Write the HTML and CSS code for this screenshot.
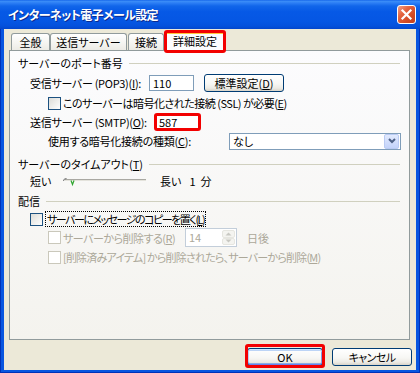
FILE: index.html
```html
<!DOCTYPE html>
<html lang="ja">
<head>
<meta charset="utf-8">
<title>インターネット電子メール設定</title>
<link rel="stylesheet" href="styles.css">
</head>
<body>
<div class="window">
  <div class="titlebar">
    <span class="title">インターネット電子メール設定</span>
    <span class="close"><svg width="13" height="13" viewBox="0 0 13 13"><path d="M2.5 2.5 L10.5 10.5 M10.5 2.5 L2.5 10.5" stroke="#fff" stroke-width="2.2" stroke-linecap="square" fill="none"/></svg></span>
  </div>
  <div class="body">
    <div class="tabs">
      <div class="tab t1">全般</div>
      <div class="tab t2">送信サーバー</div>
      <div class="tab t3">接続</div>
      <div class="tab active mark">詳細設定</div>
    </div>
    <div class="panel">
      <div class="group"><span>サーバーのポート番号</span><span class="rule"></span></div>
      <div class="row r-pop">
        <span class="lbl w-pop tight3">受信サーバー (POP3)(<u>I</u>):</span>
        <span class="edit">110</span>
        <span class="btn b-std">標準設定(<u>D</u>)</span>
      </div>
      <div class="row r-ssl indent2">
        <span class="check"></span><span class="clabel tight5">このサーバーは暗号化された接続 (SSL) が必要(<u>E</u>)</span>
      </div>
      <div class="row r-smtp">
        <span class="lbl w-smtp tight3">送信サーバー (SMTP)(<u>O</u>):</span>
        <span class="edit mark">587</span>
      </div>
      <div class="row r-enc indent2">
        <span class="lbl w-enc tight2">使用する暗号化接続の種類(<u>C</u>):</span>
        <span class="combo"><span class="combo-text">なし</span><span class="combo-btn"><svg width="8" height="6" viewBox="0 0 8 6"><path d="M1 1 L4 4 L7 1" stroke="#4D6185" stroke-width="2" fill="none"/></svg></span></span>
      </div>
      <div class="group g2"><span>サーバーのタイムアウト(<u>T</u>)</span><span class="rule"></span></div>
      <div class="row r-timeout">
        <span class="lbl w-short">短い</span>
        <svg class="slider" width="98" height="16" viewBox="0 0 98 16">
          <rect x="3" y="6" width="81" height="1" fill="#A9A8A2"/>
          <rect x="3" y="7" width="81" height="1" fill="#E4E3DC"/>
          <path d="M1.5 8 Q1.5 5.5 4.5 5.5" stroke="#6E6E6E" stroke-width="1" fill="none"/>
          <path d="M9 7.5 L10.5 11.5 L12 7.5" stroke="#2FA52F" stroke-width="1.2" fill="none"/>
        </svg>
        <span class="long">長い</span><span class="num">1</span><span class="unit">分</span>
      </div>
      <div class="group g3"><span>配信</span><span class="rule"></span></div>
      <div class="row r-copy">
        <span class="check"></span><span class="clabel focus tight15">サーバーにメッセージのコピーを置く(<u>L</u>)</span>
      </div>
      <div class="row r-del indent2 disabled">
        <span class="dgroup"><span class="check off"></span><span class="clabel tight5">サーバーから削除する(<u>R</u>)</span></span>
        <span class="spin"><span class="spin-text">14</span><span class="spin-btns"><span class="sb"><svg width="7" height="4" viewBox="0 0 7 4"><path d="M0.5 3.5 L3.5 0.5 L6.5 3.5Z" fill="#C8C8C2"/></svg></span><span class="sb"><svg width="7" height="4" viewBox="0 0 7 4"><path d="M0.5 0.5 L3.5 3.5 L6.5 0.5Z" fill="#C8C8C2"/></svg></span></span></span>
        <span class="days">日後</span>
      </div>
      <div class="row r-del2 indent2 disabled">
        <span class="check off"></span><span class="clabel tight8">[削除済みアイテム] から削除されたら、サーバーから削除(<u>M</u>)</span>
      </div>
    </div>
    <div class="buttons">
      <span class="btn b-ok b-default mark">OK</span>
      <span class="btn b-cancel tight6">キャンセル</span>
    </div>
  </div>
</div>
</body>
</html>
```

FILE: styles.css
```css
* { box-sizing: border-box; }
html, body { margin: 0; padding: 0; }
body {
  width: 420px;
  height: 373px;
  overflow: hidden;
  font-family: "Noto Sans CJK JP", "Noto Sans", sans-serif;
  font-size: 11px;
  line-height: 16px;
  color: #000;
  font-feature-settings: "palt";
  background: #fff;
}
u { text-decoration: underline; text-underline-offset: 1px; }

.tight2 { letter-spacing: -0.25px; }
.tight3 { letter-spacing: -0.3px; }
.tight5 { letter-spacing: -0.5px; }
.tight6 { letter-spacing: -0.6px; }
.tight8 { letter-spacing: -0.8px; }
.tight15 { letter-spacing: -1.5px; }

.window {
  width: 420px;
  height: 373px;
  display: flex;
  flex-direction: column;
  background: #0856E0;
  box-shadow: inset 1px 0 #0032B8, inset -1px 0 #0032B8, inset 0 -1px #0032B8;
}
.titlebar {
  height: 29px;
  flex: none;
  display: flex;
  align-items: center;
  justify-content: space-between;
  padding: 0 4px 0 8px;
  background: linear-gradient(to bottom, #0A5AE6 0, #3D8FF8 1px, #2C7EF5 3px, #1166EA 6px, #0659E6 40%, #0556E3 75%, #0451DC 90%, #0346CC 100%);
}
.title {
  color: #fff;
  font-weight: bold;
  font-size: 12px;
  letter-spacing: -0.6px;
  text-shadow: 1px 1px 0 #0C2A8E;
}
.close {
  width: 19px;
  height: 19px;
  border: 1px solid #fff;
  border-radius: 3px;
  background: linear-gradient(135deg, #F2A088 0%, #E4643F 35%, #D24A24 70%, #C0401E 100%);
  display: flex;
  align-items: center;
  justify-content: center;
}

.body {
  flex: 1;
  margin: 0 4px 3px 4px;
  padding: 2px 6px 0 5px;
  background: #ECE9D8;
  display: flex;
  flex-direction: column;
}

.tabs {
  display: flex;
  align-items: flex-start;
  height: 20px;
  padding-left: 2px;
  margin-bottom: -1px;
  flex: none;
}
.tab {
  height: 17px;
  margin-top: 2px;
  padding-top: 1px;
  border: 1px solid #919B9C;
  border-bottom: none;
  border-radius: 3px 3px 0 0;
  background: linear-gradient(#FFFFFF, #F4F4F0 60%, #ECEBE5);
  text-align: center;
  line-height: 15px;
  white-space: nowrap;
}
.t1 { width: 39px; }
.t2 { width: 77px; margin-right: 1px; }
.t3 { width: 36px; }
.tab.active {
  width: 62px;
  height: 20px;
  margin-top: 0;
  padding-top: 1px;
  line-height: 16px;
  border-top: 1px solid #E68B2C;
  background: #FCFCFE;
  box-shadow: inset 0 2px #FFC83C;
  position: relative;
  z-index: 2;
}

.mark { position: relative; }
.mark::after {
  content: "";
  position: absolute;
  inset: -3px;
  border: 3px solid #F20000;
  border-radius: 3px;
  pointer-events: none;
}
.tab.mark::after { inset: -2px -1px -2px -1px; }
.edit.mark::after { inset: -2px; }
.b-ok.mark::after { inset: -5px -3px -3px -3px; }

.panel {
  width: 401px;
  height: 290px;
  flex: none;
  border: 1px solid #919B9C;
  background: linear-gradient(#FCFCFE, #F4F3EE);
  padding: 4px 9px 0 8px;
  display: flex;
  flex-direction: column;
}
.group {
  display: flex;
  align-items: center;
  height: 16px;
  flex: none;
  white-space: nowrap;
}
.rule {
  flex: 1;
  height: 1px;
  background: #D0D0BF;
  margin-left: 6px;
}
.g2 { margin-top: 6px; }
.g3 { margin-top: 4px; }

.row {
  display: flex;
  align-items: center;
  flex: none;
  margin-left: 12px;
  white-space: nowrap;
}
.row.indent2 { margin-left: 30px; }
.r-pop { height: 20px; margin-top: 2px; }
.r-ssl { height: 18px; margin-top: 1px; }
.r-smtp { height: 18px; margin-top: 1px; }
.r-enc { height: 18px; margin-top: 1px; }
.r-timeout { height: 16px; margin-top: 1px; }
.r-copy { height: 18px; margin-top: 1px; }
.r-del { height: 19px; margin-top: 0; }
.r-del2 { height: 18px; margin-top: 1px; }

.lbl { flex: none; }
.w-pop { width: 119px; }
.w-smtp { width: 125px; }
.w-enc { width: 181px; }
.w-short { width: 32px; }

.edit {
  width: 45px;
  height: 16px;
  border: 1px solid #7F9DB9;
  background: #fff;
  padding-left: 3px;
  line-height: 14px;
  flex: none;
}

.btn {
  display: flex;
  align-items: center;
  justify-content: center;
  height: 18px;
  flex: none;
  border: 1px solid #003C74;
  border-radius: 3px;
  background: linear-gradient(#FFFFFF 0%, #F7F7F4 55%, #ECEBE5 82%, #D8D3C8 100%);
  line-height: 14px;
}
.b-std { width: 80px; margin-left: 10px; }
.b-default {
  box-shadow: inset 0 1px #CEE7FF, inset 0 2px #BCD4F6, inset 0 -1px #6982EE, inset 0 -2px #89ADE4, inset 1px 0 #B9CFF5, inset -1px 0 #7D9FE6;
}

.check {
  width: 13px;
  height: 13px;
  flex: none;
  border: 1px solid #1C5180;
  background: linear-gradient(135deg, #DCDCD7, #FFFFFF);
  margin-right: 2px;
}
.check.off {
  border-color: #CAC8BB;
  background: #fff;
}
.focus {
  border: 1px dotted #000;
  padding: 0 1px;
  line-height: 14px;
}
.disabled { color: #ACA899; }

.combo {
  width: 172px;
  height: 17px;
  flex: none;
  border: 1px solid #7F9DB9;
  background: #fff;
  display: flex;
  align-items: center;
  justify-content: space-between;
  padding: 0 1px 0 3px;
}
.combo-btn {
  width: 15px;
  height: 15px;
  border: 1px solid #BACBF3;
  border-radius: 2px;
  background: linear-gradient(#E2EAFE, #C3D3FA);
  display: flex;
  align-items: center;
  justify-content: center;
}

.slider { flex: none; display: block; }
.num { margin-left: 8px; }
.unit { margin-left: 5px; }

.dgroup {
  width: 137px;
  display: flex;
  align-items: center;
  flex: none;
}
.spin {
  width: 52px;
  height: 19px;
  flex: none;
  border: 1px solid #C3CEDA;
  background: #fff;
  display: flex;
  justify-content: space-between;
  padding: 1px;
}
.spin-text { padding-left: 2px; line-height: 15px; }
.spin-btns {
  width: 13px;
  display: flex;
  flex-direction: column;
}
.sb {
  flex: 1;
  display: flex;
  align-items: center;
  justify-content: center;
  background: #F4F4F0;
  border: 1px solid #E6E6E0;
  border-radius: 2px;
}
.days { margin-left: 10px; }

.buttons {
  display: flex;
  justify-content: flex-end;
  margin-top: 8px;
  margin-right: -2px;
  flex: none;
}
.b-ok { width: 76px; }
.b-cancel { width: 80px; margin-left: 9px; }
```
